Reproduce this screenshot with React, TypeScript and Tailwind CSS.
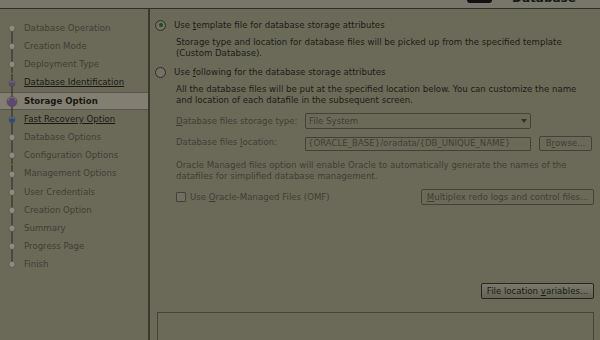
import React from "react";

type Step = {
  label: string;
  kind: "done" | "visited" | "current" | "next" | "todo";
};

const steps: Step[] = [
  { label: "Database Operation", kind: "done" },
  { label: "Creation Mode", kind: "done" },
  { label: "Deployment Type", kind: "done" },
  { label: "Database Identification", kind: "visited" },
  { label: "Storage Option", kind: "current" },
  { label: "Fast Recovery Option", kind: "next" },
  { label: "Database Options", kind: "todo" },
  { label: "Configuration Options", kind: "todo" },
  { label: "Management Options", kind: "todo" },
  { label: "User Credentials", kind: "todo" },
  { label: "Creation Option", kind: "todo" },
  { label: "Summary", kind: "todo" },
  { label: "Progress Page", kind: "todo" },
  { label: "Finish", kind: "todo" },
];

function StepDot({ kind, first, last }: { kind: Step["kind"]; first: boolean; last: boolean }) {
  const fill =
    kind === "visited" || kind === "current" ? "#5e4770" : kind === "next" ? "#2d4a86" : "#8b8a80";
  const r = kind === "current" ? 5 : 3;
  return (
    <svg width="24" height="18.2" viewBox="0 0 24 18.2" className="shrink-0">
      {!first && <line x1="12" y1="0" x2="12" y2="9.1" stroke="#26261e" strokeWidth="1" />}
      {!last && <line x1="12" y1="9.1" x2="12" y2="18.2" stroke="#26261e" strokeWidth="1" />}
      <circle cx="12" cy="9.6" r={r} fill={fill} stroke="#4a4a40" strokeWidth="0.6" />
      <path
        d={`M${12 - r + 1} ${9.6 - 0.5} A ${r - 1} ${r - 1} 0 0 1 ${12 + r - 1} ${9.6 - 0.5}`}
        fill="none"
        stroke="#a9a8a0"
        strokeOpacity="0.5"
        strokeWidth="0.8"
      />
    </svg>
  );
}

function Sidebar() {
  return (
    <div className="w-[150px] shrink-0 border-r-2 border-[#3a392e] pt-[10px]">
      {steps.map((s, i) => {
        const current = s.kind === "current";
        return (
          <div
            key={s.label}
            className={
              "flex items-center h-[18.2px] " +
              (current ? "bg-[#827f72] border-y border-[#57564a]" : "")
            }
          >
            <StepDot kind={s.kind} first={i === 0} last={i === steps.length - 1} />
            <span
              className={
                "whitespace-nowrap " +
                (current
                  ? "font-bold text-[#18180f]"
                  : s.kind === "visited" || s.kind === "next"
                  ? "underline text-[#1a1a12]"
                  : "text-[#3f3e33]")
              }
            >
              {s.label}
            </span>
          </div>
        );
      })}
    </div>
  );
}

function Radio({ checked }: { checked?: boolean }) {
  return (
    <span className="w-[11px] h-[11px] rounded-full border border-[#2f2f26] bg-[#737264] flex items-center justify-center shrink-0">
      {checked && <span className="w-[4px] h-[4px] rounded-full bg-[#1f4a2a]" />}
    </span>
  );
}

function Btn({ children, enabled, className }: { children: React.ReactNode; enabled?: boolean; className?: string }) {
  return (
    <div
      className={
        "flex items-center justify-center rounded-[2px] border whitespace-nowrap " +
        (enabled
          ? "border-[#26261e] bg-gradient-to-b from-[#7a796d] to-[#636256] text-[#1a1a12]"
          : "border-[#42413a] text-[#3f3e34]") +
        " " +
        (className ?? "")
      }
    >
      {children}
    </div>
  );
}

export default function App() {
  return (
    <div
      className="w-[600px] h-[340px] overflow-hidden bg-[#6b6a59] text-[8.6px] leading-[10.5px] text-[#1c1c14] flex flex-col"
      style={{ fontFamily: '"DejaVu Sans", sans-serif' }}
    >
      <div className="h-[9px] shrink-0 bg-[#77766b] border-b border-[#2e2e24] flex items-end overflow-hidden pl-[467px]">
        <div className="w-[25px] h-[3px] bg-[#111] rounded-b-full shrink-0 self-start" />
        <span className="ml-[20px] font-bold text-[12px] leading-[12px] text-[#1a1a14] mb-[4px]">Database</span>
      </div>

      <div className="flex flex-1 min-h-0">
        <Sidebar />

        <div className="flex-1 flex flex-col pl-[5px] pt-[10px] pr-[6px]">
          <div className="flex items-center gap-[8px] h-[12px]">
            <Radio checked />
            <span>
              Use <span className="underline">t</span>emplate file for database storage attributes
            </span>
          </div>
          <div className="pl-[21px] mt-[6px]">
            <div>Storage type and location for database files will be picked up from the specified template</div>
            <div>(Custom Database).</div>
          </div>

          <div className="flex items-center gap-[8px] h-[12px] mt-[8px]">
            <Radio />
            <span>
              Use <span className="underline">f</span>ollowing for the database storage attributes
            </span>
          </div>
          <div className="pl-[21px] mt-[6px]">
            <div>All the database files will be put at the specified location below. You can customize the name</div>
            <div>and location of each datafile in the subsequent screen.</div>

            <div className="flex items-center mt-[8px] h-[16px] text-[#3f3e34]">
              <span className="w-[129px]">
                <span className="underline">D</span>atabase files storage type:
              </span>
              <div className="w-[226px] h-[16px] border border-[#42413a] rounded-[2px] flex items-center justify-between px-[3px]">
                <span>File System</span>
                <svg width="6" height="4" viewBox="0 0 6 4">
                  <path d="M0 0 L6 0 L3 4 Z" fill="#33322a" />
                </svg>
              </div>
            </div>

            <div className="flex items-center mt-[7px] h-[15px] text-[#3f3e34]">
              <span className="w-[129px] -mt-[3px]">
                Database files <span className="underline">l</span>ocation:
              </span>
              <div className="w-[226px] h-[14px] border border-[#42413a] rounded-[1px] flex items-center px-[2px]">
                {"{ORACLE_BASE}/oradata/{DB_UNIQUE_NAME}"}
              </div>
              <Btn className="ml-[8px] w-[53px] h-[15px]">
                B<span className="underline">r</span>owse...
              </Btn>
            </div>

            <div className="mt-[9px] text-[#3f3e34]">
              <div>Oracle Managed files option will enable Oracle to automatically generate the names of the</div>
              <div>datafiles for simplified database management.</div>
            </div>

            <div className="flex items-center justify-between mt-[8px] h-[16px] text-[#3f3e34]">
              <div className="flex items-center gap-[4px]">
                <span className="w-[10px] h-[10px] border border-[#42413a] rounded-[1px] bg-[#6f6e5f]" />
                <span>
                  Use <span className="underline">O</span>racle-Managed Files (OMF)
                </span>
              </div>
              <Btn className="w-[173px] h-[16px]">
                <span>
                  <span className="underline">M</span>ultiplex redo logs and control files...
                </span>
              </Btn>
            </div>
          </div>

          <div className="flex justify-end mt-[78px]">
            <Btn enabled className="w-[113px] h-[16px]">
              <span>
                File location <span className="underline">v</span>ariables...
              </span>
            </Btn>
          </div>

          <div className="mt-[13px] ml-[2px] flex-1 border border-[#45443a] border-b-0" />
        </div>
      </div>
    </div>
  );
}
